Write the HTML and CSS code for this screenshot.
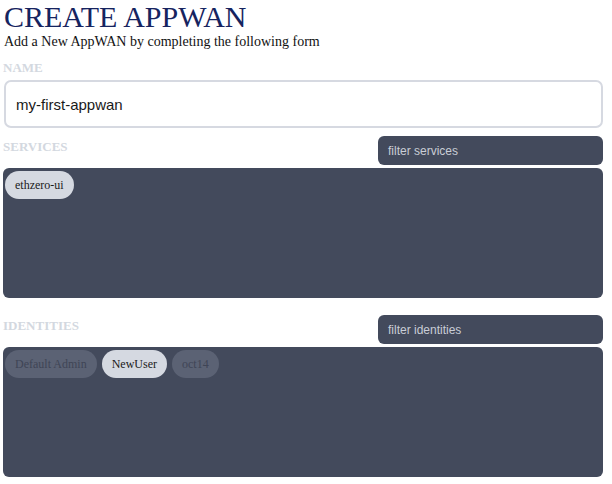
FILE: index.html
```html
<!DOCTYPE html>
<html>
<head>
<meta charset="utf-8">
<link rel="stylesheet" href="styles.css">
</head>
<body>
<div class="page">
  <h1 class="title">CREATE APPWAN</h1>
  <p class="subtitle">Add a New AppWAN by completing the following form</p>
  <div class="label name-label">NAME</div>
  <div class="name-input">my-first-appwan</div>

  <div class="section-head">
    <div class="label">SERVICES</div>
    <div class="filter">filter services</div>
  </div>
  <div class="box">
    <span class="chip chip-on">ethzero-ui</span>
  </div>

  <div class="section-head second">
    <div class="label">IDENTITIES</div>
    <div class="filter">filter identities</div>
  </div>
  <div class="box">
    <span class="chip chip-off">Default Admin</span>
    <span class="chip chip-on">NewUser</span>
    <span class="chip chip-off">oct14</span>
  </div>
</div>
</body>
</html>
```
FILE: styles.css
```css
html, body {
  margin: 0;
  padding: 0;
  background: #ffffff;
}
.page {
  width: 600px;
  padding: 0 0 0 3px;
  font-family: "Liberation Serif", "Times New Roman", serif;
  display: flex;
  flex-direction: column;
}
.title {
  margin: 0;
  padding-left: 1px;
  font-size: 30px;
  line-height: 34px;
  font-weight: normal;
  color: #16245f;
}
.subtitle {
  margin: 0;
  padding-left: 1px;
  font-size: 14px;
  line-height: 16px;
  color: #111111;
}
.label {
  font-size: 13px;
  font-weight: bold;
  color: #d3d8e0;
  line-height: 16px;
}
.name-label {
  margin-top: 10px;
}
.name-input {
  margin-top: 4px;
  margin-left: 1px;
  height: 44px;
  border: 2px solid #d6d9e1;
  border-radius: 7px;
  font-family: "Liberation Sans", Arial, sans-serif;
  font-size: 15px;
  color: #1a1a1a;
  display: flex;
  align-items: center;
  padding-left: 10px;
}
.section-head {
  margin-top: 8px;
  display: flex;
  justify-content: space-between;
  align-items: flex-start;
  height: 29px;
}
.section-head .label {
  padding-top: 3px;
}
.section-head.second {
  margin-top: 17px;
}
.filter {
  width: 215px;
  height: 29px;
  background: #434a5c;
  border-radius: 6px;
  font-family: "Liberation Sans", Arial, sans-serif;
  font-size: 12px;
  color: #c9cdd6;
  display: flex;
  align-items: center;
  padding-left: 10px;
}
.box {
  margin-top: 3px;
  height: 124px;
  background: #434a5c;
  border-radius: 6px;
  padding: 3px 2px;
  display: flex;
  align-items: flex-start;
  gap: 5px;
}
.chip {
  display: inline-flex;
  align-items: center;
  height: 28px;
  padding: 0 10px;
  border-radius: 14px;
  font-size: 12px;
}
.chip-on {
  background: #d5d9e1;
  color: #1a1a1a;
}
.chip-off {
  background: #5b6274;
  color: #3f4556;
}
```
